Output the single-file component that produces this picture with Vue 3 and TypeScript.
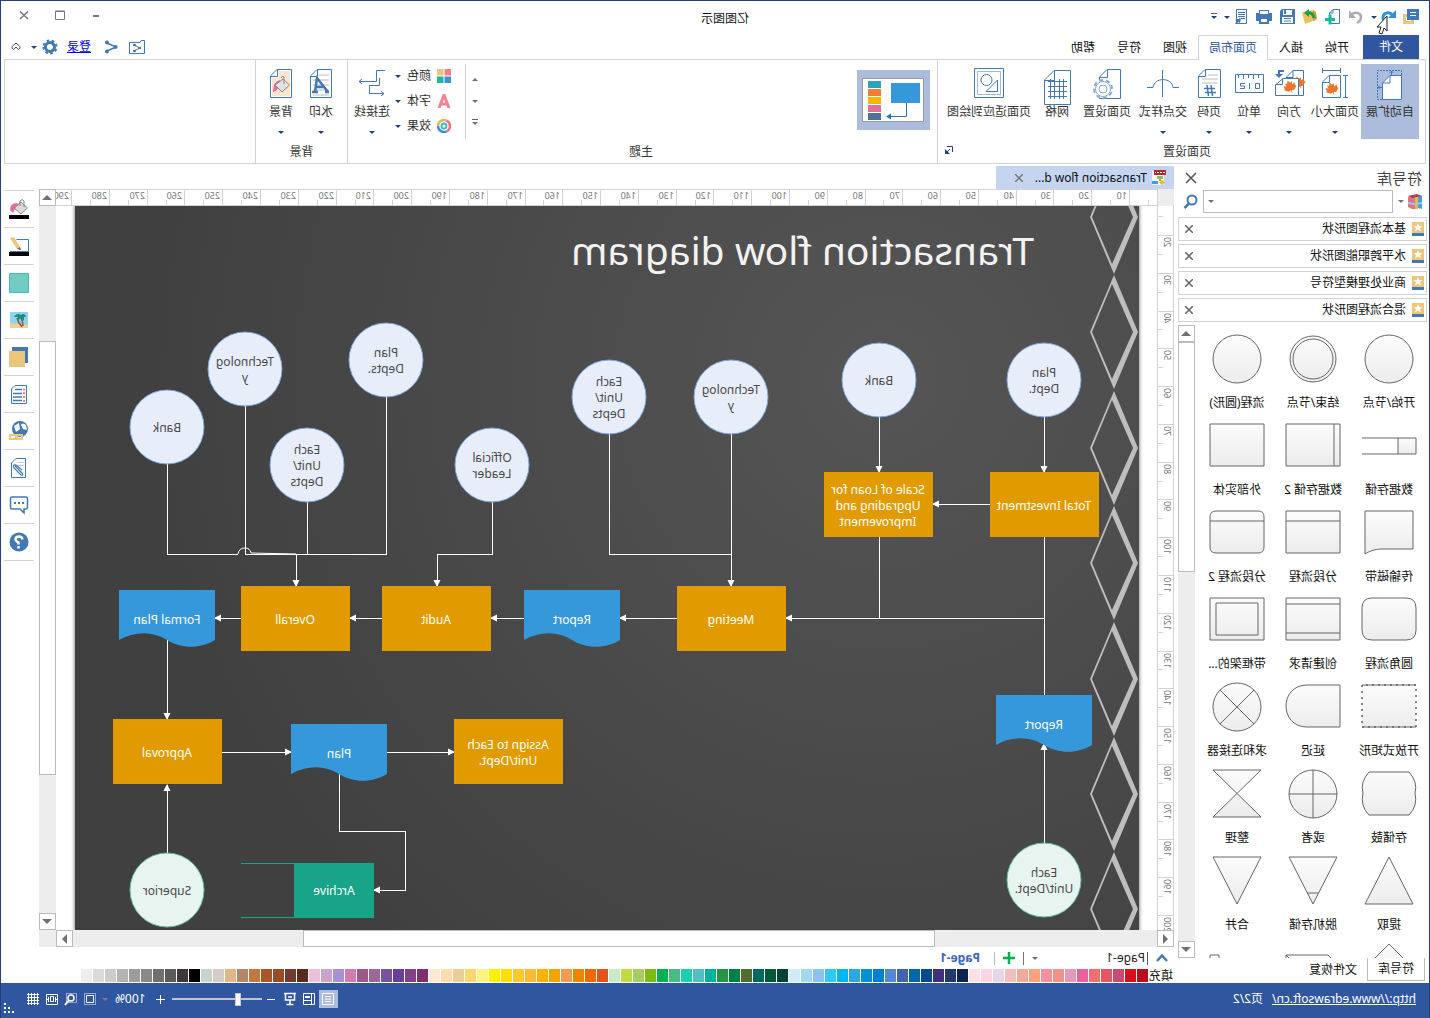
<script setup lang="ts">
import { ref } from 'vue'

interface LibraryShape {
  label: string
  body: string
  lines?: string
  open?: boolean
}

interface DiagramNode {
  kind: 'circle' | 'green' | 'box' | 'doc' | 'store'
  x: number
  y: number
  text: string[]
}

const menuTabs = ['开始', '插入', '页面布局', '视图', '符号', '帮助']
const activeTab = ref('页面布局')

const categories = ['基本流程图形状', '水平跨职能图形状', '商业处理模型符号', '混合流程图形状']

const ring = (r: number): string =>
  `M${28 - r} 28a${r} ${r} 0 1 0 ${2 * r} 0a${r} ${r} 0 1 0 ${-2 * r} 0Z`
const frame = 'M1 6H55V48H1Z'

const shapes: LibraryShape[] = [
  { label: '开始/节点', body: ring(24) },
  { label: '结束/节点', body: ring(23), lines: ring(20) },
  { label: '流程(圆形)', body: ring(24) },
  { label: '数据存储', body: 'M1 20H19V36H1Z', lines: 'M19 20H55M19 36H55' },
  { label: '数据存储 2', body: frame, lines: 'M7 6V48' },
  { label: '外部实体', body: frame },
  { label: '传输磁带', body: 'M4 6H52V49C46 45 40 44 34 44H4Z' },
  { label: '分段流程', body: frame, lines: 'M1 16H55' },
  { label: '分段流程 2', body: 'M7 6H49Q55 6 55 12V42Q55 48 49 48H7Q1 48 1 42V12Q1 6 7 6Z', lines: 'M1 16H55' },
  { label: '圆角流程', body: 'M11 6H45Q55 6 55 16V38Q55 48 45 48H11Q1 48 1 38V16Q1 6 11 6Z' },
  { label: '创建请求', body: frame, lines: 'M1 12H55M1 41H55' },
  { label: '带框架的...', body: frame, lines: 'M7 11H49V43H7Z' },
  { label: '开放式矩形', body: frame, open: true },
  { label: '延迟', body: 'M1 6H34C62 6 62 48 34 48H1Z' },
  { label: '求和连接器', body: ring(24), lines: 'M11 11L45 45M45 11L11 45' },
  { label: '存储鼓', body: 'M8 6H48Q57 16 54 27Q57 40 48 49H8Q-1 40 2 27Q-1 16 8 6Z' },
  { label: '或者', body: ring(24), lines: 'M28 4V52M4 28H52' },
  { label: '整理', body: 'M4 4H52L4 51H52Z' },
  { label: '提取', body: 'M28 4L52 51H4Z' },
  { label: '脱机存储', body: 'M4 4H52L28 51Z', lines: 'M22 40H34' },
  { label: '合并', body: 'M4 4H52L28 51Z' },
  { label: '', body: 'M28 4L52 28L28 52L4 28Z' },
  { label: '', body: 'M13 15H55V48H13L1 27Z', lines: 'M55 15L44 26' },
  { label: '', body: 'M46 15H55V48H1V40H46Z' }
]

const nodes: DiagramNode[] = [
  { kind: 'circle', x: 95, y: 174, text: ['Plan', 'Dept.'] },
  { kind: 'circle', x: 260, y: 174, text: ['Bank'] },
  { kind: 'circle', x: 408, y: 191, text: ['Technolog', 'y'] },
  { kind: 'circle', x: 530, y: 191, text: ['Each', 'Unit/', 'Depts'] },
  { kind: 'circle', x: 647, y: 259, text: ['Official', 'Leader'] },
  { kind: 'circle', x: 753, y: 154, text: ['Plan', 'Depts.'] },
  { kind: 'circle', x: 832, y: 259, text: ['Each', 'Unit/', 'Depts'] },
  { kind: 'circle', x: 894, y: 163, text: ['Technolog', 'y'] },
  { kind: 'circle', x: 972, y: 221, text: ['Bank'] },
  { kind: 'green', x: 95, y: 674, text: ['Each', 'Unit/Dept.'] },
  { kind: 'green', x: 972, y: 684, text: ['Superior'] },
  { kind: 'box', x: 95, y: 299, text: ['Total Investment'] },
  { kind: 'box', x: 261, y: 299, text: ['Scale of Loan for', 'Upgrading and', 'Improvement'] },
  { kind: 'box', x: 408, y: 413, text: ['Meeting'] },
  { kind: 'box', x: 703, y: 413, text: ['Audit'] },
  { kind: 'box', x: 844, y: 413, text: ['Overall'] },
  { kind: 'box', x: 972, y: 546, text: ['Approval'] },
  { kind: 'box', x: 631, y: 546, text: ['Assign to Each', 'Unit/Dept.'] },
  { kind: 'doc', x: 567, y: 413, text: ['Report'] },
  { kind: 'doc', x: 972, y: 413, text: ['Formal Plan'] },
  { kind: 'doc', x: 800, y: 547, text: ['Plan'] },
  { kind: 'doc', x: 95, y: 518, text: ['Report'] },
  { kind: 'store', x: 805, y: 684, text: ['Archive'] }
]

const plainLinks = [
  'M95 331V489', 'M260 331V412', 'M530 228V348H408', 'M753 191V348H843', 'M832 296V348',
  'M894 200V348H843', 'M972 258V348H901'
]
const bridge = 'M901 348Q900 342 894 342Q889 342 888 347L843 348'
const arrowLinks = [
  'M95 211V266', 'M260 211V266', 'M149 298H206', 'M95 412H353', 'M408 228V380', 'M462 412H519',
  'M615 412H648', 'M757 412H789', 'M898 412H924', 'M647 296V348H702V380', 'M843 348V380',
  'M972 434V513', 'M972 647V579', 'M917 546H848', 'M752 546H685', 'M800 568V625H734V684H765',
  'M95 637V538'
]

const diamonds = [11, 126, 242, 357, 473, 588, 703]

const step = (i: number, start: number): number => Math.round(start + i * 37.78)
const columns = Array.from({ length: 29 }, (_, i) => ({ n: (i + 1) * 10, at: step(i, 27), half: step(i - 0.5, 27) }))
const rows = Array.from({ length: 19 }, (_, i) => ({ n: (i + 2) * 10, at: step(i, 29), half: step(i - 0.5, 29) }))

const palette = (
  'b70f1d d90f1e c94b73 e85565 f07070 ea5f9f e39abb f2908a f5919d ffa07c f0ab98 f5bdbd e9d5ea ffd5e6 ffe0e6 ' +
  '0d2450 22386e 432e7b 034a90 0067a8 4263b2 5688cd 0080d0 0090d5 2fa8e2 00b5f0 30c8f8 8bc3ee a3d9f0 d0ebf5 ' +
  '004238 005a33 006a5e 556b2f 007f48 22973f 00b0a0 53bfc0 1bd0b2 47bb80 00b24f 7dbb10 a2d062 bfdc40 cfe8c8 ' +
  'e5521e ee6a00 f08400 f59a52 f0a400 ffb000 fdb934 fbc82f ffde00 fff000 fff380 ffd570 eccd98 ffdcac fde8d0 ' +
  '7c3070 824088 6a3d96 78539b 9c669f a05888 d07cb0 a990d0 c9a5c9 ebc0dc ' +
  '5a2a1a 733a2f 984c28 ae5527 c47840 b5866b deb887 d5ccc7 c8d3cb ' +
  '000000 3e3838 5a5a5a 707070 888888 9c9e9c b3b5b3 cccccc dadada ededed'
).split(' ').map(c => '#' + c)

const leaf =
  'M0-7L1.5-4 3.5-5 3-1.5 6-3 5.5 0 6.5 1 3 4 .5 3.5 0 7 -.5 3.5 -3 4 -6.5 1 -5.5 0 -6-3 -3-1.5 -3.5-5 -1.5-4Z'
const zoom = ref(25)
</script>

<template>
  <div class="window">
    <header class="titlebar">
      <div class="quick">
        <svg class="i16" viewBox="0 0 16 16"><path fill="#ecc77b" d="M5 5H16V15H5Z" /><path fill="#fff" d="M8 8H13V12H8Z" /><path fill="#4279b5" d="M0 0H12V11H0Z" /><path stroke="#fff" d="M3 3.500H9M3 6.500H9" /></svg>
        <button class="pair" aria-label="撤销">
          <svg class="i16" viewBox="0 0 16 16"><path fill="none" stroke="#2f8fdc" stroke-width="3" d="M3 7C6 2 13 3 13 9L12 12" /><path fill="#2f8fdc" d="M0 1V9H8Z" /></svg>
          <i class="caret navy"></i>
          <svg class="cursor" viewBox="0 0 12 20"><path fill="#fff" stroke="#222" d="M1 1V16L4 13L6 19L9 18L7 12H11Z" /></svg>
        </button>
        <button aria-label="恢复"><svg class="i16" viewBox="0 0 16 16"><path fill="none" stroke="#adadad" stroke-width="2.500" d="M13 6C9 2 3 4 3 8Q3 12 7 14" /><path fill="#adadad" d="M15 1V9H8Z" /></svg></button>
        <button aria-label="新建"><svg class="i16" viewBox="0 0 16 16"><path fill="#fff" stroke="#4279b5" d="M1.500 14.500V.5H8L11.500 4V14.500Z" /><path fill="none" stroke="#4279b5" d="M8 .5V4H11.500" /><path stroke="#1ab89c" stroke-width="3" d="M6 10.500H16M11 5.500V15.500" /></svg></button>
        <button aria-label="打开"><svg class="i16" viewBox="0 0 16 16"><path fill="#f0c060" d="M5 1L16 3L13 15L2 11Z" /><path fill="#d99b3b" d="M2 3L5 1V12L1 10Z" /><path fill="none" stroke="#17a14b" stroke-width="3" d="M4 9Q5 3 11 4" /><path fill="#17a14b" d="M9 0L14 4L9 8Z" /></svg></button>
        <button aria-label="保存"><svg class="i16" viewBox="0 0 16 16"><path fill="#4279b5" d="M0 0H13L15 2V15H0Z" /><path fill="#fff" d="M3 1H12V6H3ZM2 8H13V14H2Z" /><path fill="#4279b5" d="M9 1H11V5H9ZM4 9H11V10H4ZM4 11.500H11V12.500H4Z" /></svg></button>
        <button aria-label="打印"><svg class="i16" viewBox="0 0 16 16"><path fill="#4279b5" d="M3 1H13V4H16V12H13V15H3V12H0V4H3Z" /><path fill="#fff" d="M4 2H12V5H4ZM5 10H11V13H5Z" /></svg></button>
        <button aria-label="属性"><svg class="i16" viewBox="0 0 16 16"><path fill="#fff" stroke="#4279b5" d="M2.500.5H12.500V14.500H2.500Z" /><path stroke="#4279b5" d="M4 3.500H11M4 5.500H11M4 7.500H11M4 9.500H8" /><path fill="#4279b5" d="M8 9L14 11L12 12L14 15L12 15L11 13L9 14Z" /></svg></button>
        <i class="caret navy"></i>
        <i class="caret navy barred"></i>
      </div>
      <h1 class="title">亿图图示</h1>
      <div class="winctl">
        <button aria-label="最小化"><svg class="i10" viewBox="0 0 10 10"><path stroke="#777" stroke-width="2" d="M2 6H8" /></svg></button>
        <button aria-label="最大化"><svg class="i10" viewBox="0 0 10 10"><path fill="none" stroke="#777" d="M.5 1H9.500V9.500H.5Z" /><path stroke="#777" d="M0 1.500H10" /></svg></button>
        <button aria-label="关闭"><svg class="i10" viewBox="0 0 10 10"><path stroke="#777" stroke-width="1.500" d="M1 1.500L9 9M9 1.500L1 9" /></svg></button>
      </div>
    </header>

    <nav class="tabs">
      <button class="file">文件</button>
      <button v-for="t in menuTabs" :key="t" class="tab" :class="{ active: t === activeTab }" @click="activeTab = t">{{ t }}</button>
      <div class="account">
        <button aria-label="文件夹共享"><svg class="i18" viewBox="0 0 18 18"><path fill="none" stroke="#4279b5" d="M1.500 15.500V2.500H5L6 4.500H16.500V15.500Z" /><path fill="none" stroke="#4279b5" d="M12 7L6 10L12 13" /><path fill="#4279b5" d="M10 6H13V8H10ZM5 9H8V11H5ZM10 12H13V14H10Z" /></svg></button>
        <button aria-label="共享"><svg class="i16" viewBox="0 0 16 16"><path fill="none" stroke="#4279b5" stroke-width="1.500" d="M12 4L3 8L12 12" /><circle cx="12" cy="3.500" r="2" fill="#4279b5" /><circle cx="3.500" cy="8" r="2" fill="#4279b5" /><circle cx="12" cy="12.500" r="2" fill="#4279b5" /></svg></button>
        <a class="login" href="#">登录</a>
        <button class="pair prefs" aria-label="设置">
          <svg class="i16" viewBox="0 0 16 16"><circle cx="8" cy="8" r="4.500" fill="none" stroke="#4279b5" stroke-width="3" /><circle cx="8" cy="8" r="6.500" fill="none" stroke="#4279b5" stroke-width="2" stroke-dasharray="2.600 2.500" /></svg>
          <i class="caret navy"></i>
        </button>
        <button aria-label="折叠功能区"><svg class="i12" viewBox="0 0 12 12"><path fill="none" stroke="#555" d="M2 5.500L6 2L10 5.500V7L8.500 8.500L6 6L3.500 8.500L2 7Z" /></svg></button>
      </div>
    </nav>

    <section class="ribbon">
      <div class="group setup">
        <div class="tools">
          <button class="tool on">
            <svg class="big" viewBox="0 0 32 36"><path fill="none" stroke="#4279b5" stroke-dasharray="2 1" d="M4.500 7V2.500H28.500V31.500H24" /><path fill="#fff" stroke="#4279b5" d="M4.500 7.500H16L23.500 15V31.500H4.500Z" /><path fill="none" stroke="#4279b5" d="M16 7.500V15H23.500M14.500 7V3M12.500 5L14.500 3L16.500 5M24 19.500H28M26 17.500L28 19.500L26 21.500" /></svg>
            <span>自动扩展</span>
          </button>
          <button class="tool">
            <svg class="big" viewBox="0 0 32 36"><path fill="none" stroke="#4279b5" d="M10 2.500H29M10.500 0V5M28.500 0V5M5.500 7V30M3 7.500H8M3 29.500H8" /><path fill="#fff" stroke="#4279b5" d="M10.500 7.500H22L28.500 14V29.500H10.500Z" /><path fill="none" stroke="#4279b5" d="M21.500 7.500V14.500H28.500" /><path transform="translate(19 21) rotate(20)" fill="#e8762c" :d="leaf" /></svg>
            <span>页面大小</span><i class="caret navy"></i>
          </button>
          <button class="tool">
            <svg class="big" viewBox="0 0 32 36"><path fill="#fff" stroke="#4279b5" d="M1.500 2.500H12L18.500 9V27.500H1.500Z" /><path transform="translate(6 15) rotate(20)" fill="#e8762c" :d="leaf" /><path fill="#fff" stroke="#4279b5" d="M6.500 10.500H22L29.500 17V27.500H6.500Z" /><path fill="none" stroke="#4279b5" d="M12 2.500V9.500H18M22.500 10.500V16.500H29.500" /><path transform="translate(15 19) rotate(20)" fill="#e8762c" :d="leaf" /><path fill="none" stroke="#4279b5" stroke-width="2" d="M21 3H26V8" /><path fill="#4279b5" d="M22 6H30L26 10Z" /></svg>
            <span>方向</span><i class="caret navy"></i>
          </button>
          <button class="tool">
            <svg class="big" viewBox="0 0 32 36"><path fill="#fff" stroke="#4279b5" d="M1.500 6.500H29.500V24.500H1.500Z" /><path stroke="#4279b5" d="M6.500 7V10M11.500 7V11M16.500 7V10M21.500 7V11M26.500 7V10" /><path fill="none" stroke="#4279b5" d="M5.500 15.500H9.500V20.500H5.500ZM15.500 15V21M20 15.500H24.500V18H20.500V20.500H25" /></svg>
            <span>单位</span><i class="caret navy"></i>
          </button>
          <button class="tool">
            <svg class="big" viewBox="0 0 32 36"><path fill="#fff" stroke="#4279b5" d="M4.500 1.500H20L26.500 8V29.500H4.500Z" /><path fill="none" stroke="#4279b5" d="M19.500 1.500V8.500H26.500" /><path stroke="#ddd" stroke-width="2" d="M7 7H17M7 11H23M7 15H23" /><path stroke="#4279b5" stroke-width="1.500" d="M10 20.500H21M9 24.500H20M14 17L12.500 28M18 17L16.500 28" /></svg>
            <span>页码</span><i class="caret navy"></i>
          </button>
          <button class="tool">
            <svg class="big" viewBox="0 0 32 36"><path fill="none" stroke="#4279b5" d="M0 19.500H6C7 9 25 9 26 19.500H32M16.500 2V29" /></svg>
            <span>交点样式</span><i class="caret navy"></i>
          </button>
          <button class="tool plain">
            <svg class="big" viewBox="0 0 32 36"><path fill="#fff" stroke="#4279b5" d="M2.500 1.500H16L23.500 9V30.500H2.500Z" /><path fill="none" stroke="#4279b5" d="M15.500 1.500V9.500H23.500" /><circle cx="20" cy="21" r="9" fill="#fff" stroke="#8aabd0" stroke-width="2" stroke-dasharray="4 3" /><circle cx="20" cy="21" r="7.500" fill="#fff" stroke="#8aabd0" /><circle cx="20" cy="21" r="4" fill="#fff" stroke="#8aabd0" /></svg>
            <span>页面设置</span>
          </button>
          <button class="tool plain">
            <svg class="big" viewBox="0 0 32 36"><path fill="#fff" stroke="#4279b5" d="M2.500 2.500H19L28.500 12V36.500H2.500Z" /><path fill="none" stroke="#4279b5" d="M18.500 2.500V12.500H28.500M6 13.500H25M6 18.500H25M6 23.500H25M6 28.500H25M9.500 11V31M13.500 11V31M18.500 11V31M22.500 11V31" /></svg>
            <span>网格</span>
          </button>
          <button class="tool plain">
            <svg class="big" viewBox="0 0 32 36"><path fill="#fff" stroke="#4279b5" d="M1.500 .5H30.500V29.500H1.500Z" /><path fill="none" stroke="#4279b5" stroke-dasharray="1 1" d="M4.500 3.500H27.500V26.500H4.500Z" /><circle cx="18.500" cy="12" r="5.500" fill="none" stroke="#4279b5" /><path fill="none" stroke="#4279b5" d="M7.500 12V23.500H19Z" /></svg>
            <span>页面适应到绘图</span>
          </button>
        </div>
        <div class="caption">页面设置
          <button class="launch" aria-label="更多页面设置"><svg class="i8" viewBox="0 0 8 8"><path fill="none" stroke="#24417c" d="M.5 6V.5H6M3 3L7 7" /><path fill="#24417c" d="M8 3V8H3Z" /></svg></button>
        </div>
      </div>

      <div class="group themes">
        <div class="tools">
          <button class="theme" aria-label="主题样式">
            <svg viewBox="0 0 64 46" width="64" height="46"><path fill="#fff" stroke="#999" d="M1.500 1.500H62.500V44.500H1.500Z" /><path fill="#3598db" d="M5 6H34V26H5Z" /><path fill="none" stroke="#2774ae" d="M18.500 26V39.500H35" /><path fill="#2774ae" d="M34 36.500L39 39.500L34 42.500Z" /><path fill="#2aa3bf" d="M44 4H57V11H44Z" /><path fill="#f07f33" d="M44 12H57V19H44Z" /><path fill="#fdb100" d="M44 20H57V27H44Z" /><path fill="#e0709a" d="M44 28H57V35H44Z" /><path fill="#4d7294" d="M44 36H57V43H44Z" /></svg>
          </button>
          <div class="spin">
            <button aria-label="上一行"><i class="caret up gray"></i></button>
            <button aria-label="下一行"><i class="caret gray"></i></button>
            <button aria-label="展开"><i class="caret gray barred"></i></button>
          </div>
          <div class="styles">
            <button><svg class="i14" viewBox="0 0 14 14"><path fill="#f4808c" d="M0 0H6.500V6.500H0Z" /><path fill="#ecc77b" d="M7.500 0H14V6.500H7.500Z" /><path fill="#4290cf" d="M0 7.500H6.500V14H0Z" /><path fill="#1ab89c" d="M7.500 7.500H14V14H7.500Z" /></svg>颜色<i class="caret navy"></i></button>
            <button><svg class="i14" viewBox="0 0 14 14"><path fill="none" stroke="#f08494" stroke-width="3" d="M2 14L7 1L12 14M4 10H10" /></svg>字体<i class="caret navy"></i></button>
            <button><svg class="i14" viewBox="0 0 14 14"><circle cx="7" cy="7" r="6" fill="none" stroke="#4290cf" stroke-width="2.500" stroke-dasharray="12 26" /><circle cx="7" cy="7" r="6" fill="none" stroke="#ef6f80" stroke-width="2.500" stroke-dasharray="13 25" stroke-dashoffset="-12" /><circle cx="7" cy="7" r="6" fill="none" stroke="#ecb45b" stroke-width="2.500" stroke-dasharray="13 25" stroke-dashoffset="-25" /><circle cx="7" cy="7" r="2.500" fill="none" stroke="#3cbfc0" stroke-width="2" /></svg>效果<i class="caret navy"></i></button>
          </div>
          <button class="tool">
            <svg class="big" viewBox="0 0 32 36"><path fill="none" stroke="#4279b5" d="M3 2.500H11.500V13.500H29M26 11L29 13.500L26 16M8.500 10V17.500H18.500V25.500H4M7 23L4 25.500L7 28" /></svg>
            <span>连接线</span><i class="caret navy"></i>
          </button>
        </div>
        <div class="caption">主题</div>
      </div>

      <div class="group back">
        <div class="tools">
          <button class="tool">
            <svg class="big" viewBox="0 0 32 36"><path fill="#fff" stroke="#4279b5" d="M5.500 1.500H20L26.500 8V29.500H5.500Z" /><path fill="none" stroke="#4279b5" d="M19.500 1.500V8.500H26.500" /><path stroke="#ddd" stroke-width="2" d="M8 7H18M8 12H24M8 17H24M8 22H24M8 27H24" /><path fill="none" stroke="#4279b5" stroke-width="2.500" d="M9 24L20 10L22 24M13 19H22M8 24H12M19 24H25" /></svg>
            <span>水印</span><i class="caret navy"></i>
          </button>
          <button class="tool">
            <svg class="big" viewBox="0 0 32 36"><path fill="#fff" stroke="#4279b5" d="M5.500 1.500H20L26.500 8V29.500H5.500Z" /><path fill="#fce6cf" d="M7 3H18V10H25V28H7Z" /><path fill="none" stroke="#4279b5" d="M19.500 1.500V8.500H26.500" /><path fill="#e0709a" d="M17 12Q24 13 24 24Q19 23 18 17Z" /><path fill="#e2e2e2" stroke="#888" d="M7.500 17L14 11L22 17L15 24Z" /><path fill="none" stroke="#888" d="M13 16V9Q15 7 16 10" /></svg>
            <span>背景</span><i class="caret navy"></i>
          </button>
        </div>
        <div class="caption">背景</div>
      </div>
    </section>

    <main class="work">
      <aside class="library">
        <div class="head"><h2>符号库</h2><button aria-label="关闭符号库"><svg class="i12" viewBox="0 0 12 12"><path stroke="#555" stroke-width="1.500" d="M1 1L11 11M11 1L1 11" /></svg></button></div>
        <div class="search">
          <button class="books" aria-label="库"><svg class="i16" viewBox="0 0 16 16"><path fill="#4d9fce" d="M1 2L5 1V14L1 15Z" /><path fill="#ecb45b" d="M5 1H8V15H5Z" /><path fill="#e57480" d="M8 2L11 1L15 3V13L11 15H8Z" /><path fill="#a04a58" d="M1 2L6 0L15 2L11 4Z" /><path fill="#8ad0e8" d="M1 8L9 9L15 8V10L9 11L1 10Z" /></svg><i class="caret gray"></i></button>
          <div class="field"><input type="text" aria-label="搜索符号" /><i class="caret gray"></i></div>
          <button aria-label="搜索"><svg class="i16" viewBox="0 0 16 16"><circle cx="7" cy="6" r="4.500" fill="none" stroke="#4279b5" stroke-width="2" /><path stroke="#4279b5" stroke-width="2.500" d="M10 9.500L14.500 14" /></svg></button>
        </div>
        <ul class="cats">
          <li v-for="c in categories" :key="c">
            <svg class="star" viewBox="0 0 12 14"><path fill="#ecc77b" d="M0 0H12V11H0Z" /><path fill="#4279b5" d="M0 11H12V14H0Z" /><path fill="#fff" d="M6 1L7.200 4.300H10.500L8 6.300L9 9.500L6 7.500L3 9.500L4 6.300L1.500 4.300H4.800Z" /></svg>
            <button class="cat">{{ c }}</button>
            <button :aria-label="'关闭' + c"><svg class="i8" viewBox="0 0 8 8"><path stroke="#666" stroke-width="1.500" d="M0 0L8 8M8 0L0 8" /></svg></button>
          </li>
        </ul>
        <div class="shapes">
          <div class="grid">
            <figure v-for="(s, i) in shapes" :key="i">
              <svg viewBox="0 0 56 56" width="56" height="56">
                <defs><linearGradient id="shapeFill" x2="0" y2="1"><stop offset="0" stop-color="#fcfcfc" /><stop offset="1" stop-color="#ececec" /></linearGradient></defs>
                <path class="outline" :class="{ open: s.open }" :d="s.body" />
                <path v-if="s.open" class="inner" d="M1 6H55M1 48H55" />
                <path v-if="s.lines" class="inner" :d="s.lines" />
              </svg>
              <figcaption>{{ s.label }}</figcaption>
            </figure>
          </div>
          <div class="vbar">
            <button aria-label="向上"><i class="caret up big"></i></button>
            <div class="thumb t229"></div><div class="t370"></div>
            <button aria-label="向下"><i class="caret big"></i></button>
          </div>
        </div>
        <div class="dock"><button class="current">符号库</button><button>文件恢复</button></div>
      </aside>

      <section class="document">
        <div class="doctab">
          <svg class="i16" viewBox="0 0 16 16"><path fill="#fff" stroke="#ccc" stroke-width=".5" d="M3 1H15V15H3Z" /><path fill="#b3282d" d="M1 0H13V5H1Z" /><path stroke="#fff" stroke-dasharray="2 1" d="M2 2.500H12" /><path fill="#8cc152" d="M4 6H10V9H8V11H6V9H4Z" /><path fill="#f6b02c" d="M5 10L8 12.500L5 15L2 12.500Z" /><path fill="#3b9cf0" d="M9 11H15V14H9Z" /></svg>
          <span>Transaction flow d...</span>
          <button aria-label="关闭文档"><svg class="i8" viewBox="0 0 8 8"><path stroke="#777" stroke-width="1.500" d="M0 0L8 8M8 0L0 8" /></svg></button>
        </div>

        <div class="editor">
          <div class="corner"></div>
          <svg class="hruler" height="18">
            <g v-for="c in columns" :key="c.n">
              <path d="M.5 0V17" :transform="`translate(${c.at} 0)`" />
              <path d="M.5 10V17" :transform="`translate(${c.half} 0)`" />
              <text :x="c.at + 3" y="9">{{ c.n }}</text>
            </g>
          </svg>
          <div class="vruler">
            <svg>
              <g v-for="r in rows" :key="r.n">
                <path d="M0 .5H17" :transform="`translate(0 ${r.at})`" />
                <path d="M10 .5H17" :transform="`translate(0 ${r.half})`" />
                <text text-anchor="end" :transform="`translate(9 ${r.at + 2}) rotate(-90)`">{{ r.n }}</text>
              </g>
            </svg>
          </div>
          <div class="canvas">
            <div class="page">
              <svg class="diagram">
                <defs>
                  <marker id="arrow" markerWidth="7" markerHeight="8" refX="6" refY="4" orient="auto" markerUnits="userSpaceOnUse"><path fill="#fff" d="M0 .5L7 4L0 7.500Z" /></marker>
                </defs>
                <path v-for="d in diamonds" :key="d" class="diamond" :transform="`translate(25 ${d})`" d="M0-57L24 0L0 57L-24 0ZM2-48L-19 0L2 47L22 0Z" />
                <text class="heading" x="105" y="59">Transaction flow diagram</text>
                <path v-for="l in plainLinks" :key="l" class="link" :d="l" />
                <path class="link bridge" :d="bridge" />
                <path v-for="l in arrowLinks" :key="l" class="link" marker-end="url(#arrow)" :d="l" />
                <g v-for="(n, i) in nodes" :key="i" :class="n.kind" :transform="`translate(${n.x} ${n.y})`">
                  <circle v-if="n.kind === 'circle' || n.kind === 'green'" r="37" />
                  <path v-else-if="n.kind === 'box'" d="M-55-33H54V32H-55Z" />
                  <path v-else-if="n.kind === 'doc'" d="M-48-29H48V21C32 12 14 12 0 21C-14 30-34 30-48 21Z" />
                  <template v-else><path d="M-40-27H40V28H-40Z" /><path class="rail" d="M40-26.500H93M40 27.500H93" /></template>
                  <text v-for="(t, k) in n.text" :key="k" :y="5 + k * 16 - (n.text.length - 1) * 8">{{ t }}</text>
                </g>
              </svg>
            </div>
          </div>
          <div class="vbar right">
            <button aria-label="向上滚动"><i class="caret up big"></i></button>
            <div class="t135"></div><div class="thumb t434"></div><div class="t138"></div>
            <button aria-label="向下滚动"><i class="caret big"></i></button>
          </div>
          <div class="hbar">
            <button aria-label="向左滚动"><i class="caret left"></i></button>
            <div class="t222"></div><div class="thumb t632"></div><div class="t230"></div>
            <button aria-label="向右滚动"><i class="caret rightward"></i></button>
          </div>
        </div>

        <div class="pages">
          <button aria-label="展开页面"><svg class="i12" viewBox="0 0 12 12"><path fill="none" stroke="#4279b5" stroke-width="2.500" d="M1 9L6 3.500L11 9" /></svg></button>
          <div class="pick"><select aria-label="页面"><option>Page-1</option></select><i class="caret gray"></i></div>
          <button class="add" aria-label="添加页面"><svg class="i12" viewBox="0 0 12 12"><path stroke="#00b050" stroke-width="2.500" d="M0 6H12M6 0V12" /></svg></button>
          <button class="pagename">Page-1</button>
        </div>
        <div class="palette">
          <span>填充</span>
          <button v-for="(c, i) in palette" :key="i" :aria-label="c" :style="{ background: c }"></button>
        </div>
      </section>

      <aside class="side">
        <button aria-label="填充"><svg viewBox="0 0 22 22"><path fill="#d9d9d9" stroke="#888" d="M2.500 10L9 4L16 10L9 16Z" /><path fill="none" stroke="#888" d="M6 9V3Q8 0 10 3V8" /><path fill="#e0709a" d="M13 5Q20 5 20 12L17 15L14 9L11 7Z" /><path d="M1 17H21V21H1Z" /></svg></button>
        <button aria-label="线条"><svg viewBox="0 0 22 22"><path fill="none" stroke="#4279b5" d="M1.500 16.500V4.500H13.500M1.500 16.500H20" /><path fill="#ecc77b" d="M16 2L20 3L13 14L10 12Z" /><path fill="#7a4b35" d="M10 12L13 14L9 15Z" /><path d="M1 17H21V21H1Z" /></svg></button>
        <button aria-label="颜色"><svg viewBox="0 0 22 22"><path fill="#73cbc6" stroke="#4db8b0" d="M1.500 1.500H20.500V20.500H1.500Z" /></svg></button>
        <button aria-label="图片"><svg viewBox="0 0 22 22"><path fill="#8fd3f0" d="M2 3H20V19H2Z" /><path fill="#f4cf94" d="M2 16L20 14V19H2Z" /><path fill="none" stroke="#8c5a3c" stroke-width="1.500" d="M9 9Q7 13 7 17M13 9Q12 13 8 18" /><path fill="#159080" d="M4 8Q5 3 9 6Q13 3 16 8L12 8L13 12L9 9L6 12L6 8Z" /></svg></button>
        <button aria-label="图层"><svg viewBox="0 0 22 22"><path fill="#4279b5" d="M2 1H18V17H2Z" /><path fill="#ecc77b" d="M5 5H21V21H5Z" /></svg></button>
        <button aria-label="文档"><svg viewBox="0 0 22 22"><path fill="#fff" stroke="#4279b5" d="M3.500 2.500H15L18.500 6V20.500H3.500Z" /><path stroke="#4279b5" stroke-width="1.500" d="M8 6.500H15M8 10.500H17M8 14H17M8 17.500H17" /><path stroke="#f08080" stroke-width="2" stroke-dasharray="2 1.800" d="M6 5.500V19" /></svg></button>
        <button aria-label="超链接"><svg viewBox="0 0 22 22"><circle cx="10" cy="9" r="8" fill="#4279b5" /><path fill="#fff" d="M4 5Q8 2 9 5L7 9L3 10ZM11 3L16 6L14 12L10 9Z" /><path fill="none" stroke="#ecc77b" stroke-width="2" d="M8 15H13V19H8ZM14 15H20V19H14Z" /></svg></button>
        <button aria-label="附件"><svg viewBox="0 0 22 22"><path fill="#fff" stroke="#4279b5" d="M4.500 1.500H14L18.500 6V20.500H4.500Z" /><path stroke="#ccc" d="M6 5.500H13M6 8.500H16" /><path fill="none" stroke="#4279b5" stroke-width="1.200" d="M15 9L8 16Q6 19 9 18L16 11Q18 7 14 8L8 13" /></svg></button>
        <button aria-label="批注"><svg viewBox="0 0 22 22"><path fill="#fff" stroke="#4279b5" stroke-width="1.500" d="M4 3H18Q19.500 3 19.500 5V13Q19.500 15 18 15H10L6 19V15H4Q2.500 15 2.500 13V5Q2.500 3 4 3Z" /><path stroke="#4279b5" stroke-width="2" stroke-dasharray="2 2" d="M6 9H16" /></svg></button>
        <button aria-label="帮助"><svg viewBox="0 0 22 22"><circle cx="11" cy="11" r="9.500" fill="#4279b5" /><path fill="none" stroke="#fff" stroke-width="2.500" d="M7.500 8.500Q8 5.500 11 5.500Q14.500 5.500 14.500 8.500Q14 10.500 11.500 11.500V13.500M11.500 15V17.500" /></svg></button>
      </aside>
    </main>

    <footer class="status">
      <a href="http://www.edrawsoft.cn/">http://www.edrawsoft.cn/</a>
      <span class="count">页2/2</span>
      <div class="views">
        <button class="view on" aria-label="普通视图"><svg class="i14" viewBox="0 0 14 14"><path fill="none" stroke="#fff" d="M1.500 1.500H12.500V12.500H1.500ZM4 4.500H10M4 7H10M4 9.500H10" /></svg></button>
        <button class="view" aria-label="页面视图"><svg class="i14" viewBox="0 0 14 14"><path fill="none" stroke="#fff" d="M1.500 1.500H12.500V12.500H1.500ZM4.500 1.500V12.500M4.500 8.500H12.500" /><path fill="#fff" d="M6 4H11V6H6Z" /></svg></button>
        <button class="view" aria-label="演示"><svg class="i14" viewBox="0 0 14 14"><path fill="none" stroke="#fff" stroke-width="1.500" d="M1 1.500H13M2.500 2V8H11.500V2M7 8V12M3.500 12.500H10.500M5 5H9" /></svg></button>
        <button class="sign" aria-label="缩小"><svg class="i10" viewBox="0 0 10 10"><path stroke="#fff" d="M1 5.500H9" /></svg></button>
        <input v-model="zoom" type="range" min="0" max="100" aria-label="缩放" />
        <button class="sign" aria-label="放大"><svg class="i10" viewBox="0 0 10 10"><path stroke="#fff" d="M1 5.500H10M5.500 1V10" /></svg></button>
        <button class="percent">100%<i class="caret dim"></i></button>
        <button class="view" aria-label="适应页面"><svg class="i14" viewBox="0 0 14 14"><path fill="none" stroke="#fff" stroke-dasharray="1 1" d="M1.500 1.500H12.500V12.500H1.500Z" /><path fill="none" stroke="#fff" d="M3.500 3.500H10.500V10.500H3.500Z" /></svg></button>
        <button class="view" aria-label="缩放选区"><svg class="i14" viewBox="0 0 14 14"><path fill="none" stroke="#fff" stroke-dasharray="1 1" d="M1.500 1.500H11.500V10.500H1.500Z" /><circle cx="7" cy="6" r="3" fill="none" stroke="#fff" stroke-width="1.500" /><path stroke="#fff" stroke-width="2" d="M9 8L13 13" /></svg></button>
        <button class="view" aria-label="适应宽度"><svg class="i14" viewBox="0 0 14 14"><path fill="none" stroke="#fff" d="M1.500 2.500H12.500V12.500H1.500ZM5.500 4.500H8.500V9.500H5.500ZM1 7.500H4M10 7.500H13M3.500 5V10M10.500 5V10" /></svg></button>
        <button class="view" aria-label="网格"><svg class="i14" viewBox="0 0 14 14"><path stroke="#fff" d="M1 2.500H13M1 5.500H13M1 8.500H13M1 11.500H13M2.500 1V13M5.500 1V13M8.500 1V13M11.500 1V13" /></svg></button>
      </div>
      <svg class="grip" viewBox="0 0 10 10"><path fill="#fff" d="M8 0H10V2H8ZM8 4H10V6H8ZM4 4H6V6H4ZM8 8H10V10H8ZM4 8H6V10H4ZM0 8H2V10H0Z" /></svg>
    </footer>
  </div>
</template>

<style>
body { margin: 0; background: #fff; }
</style>

<style scoped>
* { box-sizing: border-box; }
.window { display: flex; flex-direction: column; height: 100vh; border: 1px solid #24417c; border-bottom: 0; background: #fff; color: #111; font: 12px/16px "Noto Sans", "Noto Sans CJK SC", sans-serif; transform: scaleX(-1); overflow: hidden; }
button { display: flex; align-items: center; justify-content: center; margin: 0; padding: 0; border: 0; background: none; color: inherit; font: inherit; white-space: nowrap; }
svg { display: block; flex: none; }
h1, h2, ul, figure { margin: 0; padding: 0; font-weight: 400; list-style: none; }
.i8 { width: 8px; height: 8px; }
.i10 { width: 10px; height: 10px; }
.i12 { width: 12px; height: 12px; }
.i14 { width: 14px; height: 14px; }
.i16 { width: 16px; height: 16px; }
.i18 { width: 18px; height: 18px; }

.caret { flex: none; width: 6px; border: 3px solid transparent; border-top-color: #707070; border-bottom: 0; }
.caret.navy { border-top-color: #24417c; }
.caret.dim { border-top-color: #7b7f8c; }
.caret.up { border-bottom: 3px solid #707070; border-top: 0; }
.caret.big { width: 10px; border-width: 5px 5px 0; }
.caret.up.big { border-width: 0 5px 5px; }
.caret.left { width: 5px; border: 5px solid transparent; border-right-color: #707070; border-left: 0; }
.caret.rightward { width: 5px; border: 5px solid transparent; border-left-color: #707070; border-right: 0; }
.caret.barred { position: relative; }
.caret.barred::before { content: ""; position: absolute; left: -3px; top: -6px; width: 6px; height: 1px; background: #606060; }

.titlebar { display: grid; grid-template-columns: 1fr auto 1fr; align-items: center; flex: none; height: 34px; padding: 0 18px 0 10px; }
.quick { display: flex; align-items: center; gap: 7px; padding-bottom: 2px; }
.quick > .caret { margin-left: -4px; }
.quick > .barred { margin-left: 0; }
.pair { position: relative; gap: 3px; }
.prefs { gap: 5px; }
.cursor { position: absolute; left: 8px; top: 6px; width: 12px; height: 20px; z-index: 2; }
.title { padding: 2px 12px 0 0; font-size: 12px; line-height: 16px; }
.winctl { display: flex; justify-content: flex-end; gap: 26px; padding-bottom: 6px; }

.tabs { display: flex; flex: none; height: 24px; padding: 0 9px 0 10px; }
.file { width: 56px; margin-right: 3px; background: #3156a0; color: #fff; }
.tab { height: 25px; padding: 0 11px; }
.tab.active { position: relative; z-index: 1; padding: 0 10px; border: 1px solid #d2d2d2; border-bottom: 0; background: #fff; color: #3156a0; }
.account { display: flex; align-items: center; gap: 9px; margin-left: auto; }
.login { margin-left: 3px; color: #00f; }

.ribbon { display: flex; flex: none; height: 105px; margin: 0 3px; border: 1px solid #d2d2d2; color: #333; }
.group { display: flex; flex-direction: column; padding-top: 4px; border-right: 1px solid #d2d2d2; }
.tools { display: flex; height: 75px; }
.setup { flex: none; padding-left: 6px; padding-right: 7px; }
.themes { flex: 1; max-width: 590px; padding-left: 7px; }
.back { flex: none; width: 92px; }
.back .tools { padding-left: 6px; }
.tool { flex-direction: column; justify-content: flex-start; min-width: 40px; padding: 4px 2px 0; }
.tool.on { padding: 4px 5px 0; background: #abbcdd; }
.tool.plain { margin-left: 4px; }
.big:is(svg) { width: 32px; height: 36px; overflow: visible; }
.tool .caret { margin-top: 11px; }
.caption { position: relative; margin-top: 5px; padding-right: 10px; text-align: center; }
.themes .caption { padding-right: 4px; }
.back .caption { padding: 0; }
.launch { position: absolute; right: 0; top: 2px; }
.theme { width: 73px; height: 60px; margin-top: 6px; background: #abbcdd; }
.spin { display: flex; flex-direction: column; gap: 18px; width: 20px; height: 75px; margin-left: auto; padding-top: 13px; align-items: center; border-right: 1px solid #d2d2d2; }
.spin button { height: 4px; }
.styles { display: flex; flex-direction: column; gap: 9px; padding: 4px 3px 0 14px; }
.styles button { gap: 6px; }
.themes .tool { margin-right: 4px; }

.work { display: flex; flex: 1; min-height: 0; }
.library { display: flex; flex-direction: column; flex: none; width: 255px; padding: 0 4px 0 2px; }
.head { display: flex; align-items: center; justify-content: space-between; flex: none; height: 26px; padding: 2px 7px 0 5px; color: #444; }
.head h2 { font-size: 15px; line-height: 20px; }
.search { display: flex; align-items: center; flex: none; height: 23px; padding: 0 5px 0 4px; }
.books { gap: 3px; width: 30px; justify-content: flex-start; }
.field { position: relative; display: flex; align-items: center; flex: 1; height: 23px; margin-right: 4px; }
.field input { width: 100%; height: 23px; padding: 0 16px 0 4px; border: 1px solid #bbb; background: #fff; font: inherit; }
.field .caret { position: absolute; right: 5px; }
.cats { display: flex; flex-direction: column; flex: none; gap: 3px; margin: 4px 0 3px; }
.cats li { display: flex; align-items: center; height: 24px; padding: 0 6px 0 2px; border: 1px solid #d2d2d2; }
.star { width: 12px; height: 14px; margin-right: 6px; }
.cat { flex: 1; justify-content: flex-start; }
.shapes { display: flex; flex: 1; min-height: 0; }
.grid { display: grid; grid-template-columns: repeat(3, 76px); grid-auto-rows: 87px; flex: 1; overflow: hidden; }
figure { display: flex; flex-direction: column; align-items: center; padding-top: 6px; }
figcaption { margin-top: 8px; white-space: nowrap; }
.outline { fill: url(#shapeFill); stroke: #666; }
.outline.open { stroke: #111; stroke-dasharray: 2 4; stroke-width: 1; }
.inner { fill: none; stroke: #666; }
.dock { display: flex; flex: none; height: 25px; padding: 0 2px 2px; }
.dock button { padding: 0 10px; }
.dock .current { border: 1px solid #bbb; border-top: 0; }

.vbar, .hbar { display: flex; background: #ededed; }
.vbar { flex-direction: column; width: 17px; }
.hbar button, .vbar button { flex: none; width: 17px; height: 17px; border: 1px solid #bbb; background: #fff; }
.thumb { border: 1px solid #bbb; background: #fff; }
.t135 { flex: 135; }
.t138 { flex: 138; }
.t222 { flex: 222; }
.t229 { flex: 229; }
.t230 { flex: 230; }
.t370 { flex: 370; }
.t434 { flex: 434; }
.t632 { flex: 632; }

.document { display: flex; flex-direction: column; flex: 1; min-width: 0; padding-top: 2px; }
.doctab { display: flex; align-items: center; align-self: flex-start; flex: none; height: 23px; padding: 0 19px 0 7px; gap: 4px; background: #c5d5ef; }
.doctab button { margin-left: 8px; }
.editor { display: grid; grid-template: 17px minmax(0, 1fr) 17px / 17px minmax(0, 1fr) 17px; flex: 1; min-height: 0; }
.corner { border-right: 1px solid #d2d2d2; background: #ededed; }
.hruler { width: 100%; height: 17px; border-top: 1px solid #d2d2d2; border-bottom: 1px solid #d2d2d2; overflow: hidden; }
.vruler { position: relative; grid-area: 2 / 1; border-left: 1px solid #d2d2d2; border-right: 1px solid #d2d2d2; overflow: hidden; }
.vruler svg { width: 17px; height: 100%; overflow: hidden; }
.hruler path, .vruler path { stroke: #d2d2d2; }
.hruler text, .vruler text { fill: #777; font-size: 9px; }
.canvas { display: flex; grid-area: 2 / 2; padding: 0 19px 0 18px; overflow: hidden; }
.page { flex: 1; min-width: 0; background: radial-gradient(circle at 24% 24%, #555, #404040 76%); box-shadow: 0 0 3px 1px #999; overflow: hidden; }
.diagram { width: 100%; height: 100%; overflow: hidden; }
.vbar.right { grid-area: 1 / 3 / 3 / 4; }
.hbar { grid-area: 3 / 1 / 4 / 4; padding-right: 17px; }

.diamond { fill: #bebebe; fill-rule: evenodd; }
.heading { fill: #f2f2f2; font-size: 39px; }
.link { fill: none; stroke: #fff; shape-rendering: crispEdges; }
.bridge { shape-rendering: auto; }
.diagram g text { fill: #fff; font-size: 12px; text-anchor: middle; }
.diagram .circle text, .diagram .green text { fill: #4a4a4a; }
.circle circle { fill: #e8eef9; stroke: #7ba7dd; }
.green circle { fill: #e8f4f0; stroke: #5fbf9f; }
.box path { fill: #e19b00; }
.doc path { fill: #3598db; }
.store path { fill: #18a489; }
.store .rail { stroke: #18a489; }

.pages { display: flex; align-items: center; flex: none; height: 22px; padding-left: 6px; }
.pick { display: flex; align-items: center; width: 125px; height: 13px; margin-left: 8px; padding-right: 8px; border-left: 1px solid #555; border-right: 1px solid #777; }
.pick select { flex: 1; margin: 0; padding: 0 2px; border: 0; appearance: none; background: none; color: #222; font: inherit; }
.add { width: 29px; height: 13px; border-right: 1px solid #bbb; }
.pagename { margin-left: 14px; color: #3b62cc; font-weight: 700; }
.palette { display: flex; flex: none; align-items: center; gap: 1px; height: 14px; padding: 0 0 1px 1px; }
.palette span { line-height: 13px; }
.palette button { flex: none; width: 11px; height: 13px; }

.side { display: flex; flex-direction: column; flex: none; width: 38px; padding: 26px 3px 0 5px; }
.side button { height: 37px; border-top: 1px solid #d2d2d2; }
.side button:last-child { height: 38px; border-bottom: 1px solid #d2d2d2; }
.side svg { width: 22px; height: 22px; }

.status { display: flex; align-items: center; flex: none; height: 35px; padding: 0 3px 3px 13px; background: #3156a0; color: #fff; }
.status a { color: #fff; }
.count { margin-left: 9px; }
.views { display: flex; align-items: center; margin-left: auto; }
.view { width: 19px; height: 18px; }
.view.on { background: #abbcdd; }
.sign { width: 12px; margin: 0 2px 0 4px; }
.views input { width: 90px; height: 14px; margin: 0 1px; appearance: none; background: linear-gradient(#c4c4c4, #c4c4c4) center / 100% 2px no-repeat; }
.views input::-webkit-slider-thumb { width: 6px; height: 13px; appearance: none; border: 1px solid #c8c8c8; background: #fff; }
.percent { gap: 7px; margin: 0 2px 0 7px; }
.grip { width: 10px; height: 10px; margin: 18px 0 0 10px; }
</style>
